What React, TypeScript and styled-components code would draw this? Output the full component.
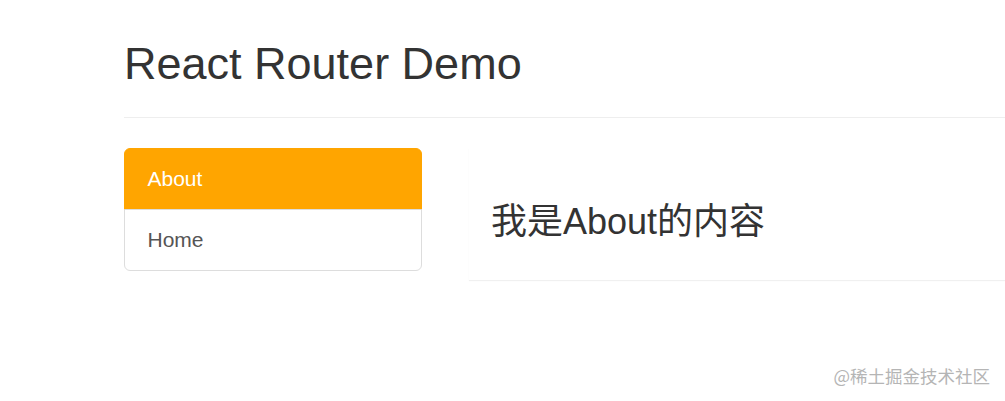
import React from 'react';
import styled, { createGlobalStyle } from 'styled-components';

const GlobalStyle = createGlobalStyle`
	html, body {
		margin: 0;
		padding: 0;
		background: #fff;
	}
	body {
		font-family: "Liberation Sans", Arial, "Noto Sans CJK SC", sans-serif;
		color: #333;
		overflow: hidden;
	}
`;

const Page = styled.div`
	position: relative;
	width: 1005px;
	height: 401px;
	overflow: hidden;
`;

const Container = styled.div`
	padding-left: 124px;
`;

const PageHeader = styled.header`
	padding: 39px 0 13.5px;
	border-bottom: 1px solid #eee;
`;

const Title = styled.h1`
	margin: 0 0 15px;
	font-size: 45px;
	line-height: 49.5px;
	font-weight: 500;
	color: #333;
`;

const Row = styled.div`
	display: flex;
	align-items: flex-start;
	gap: 47px;
	margin-top: 30px;
`;

const ListGroup = styled.nav`
	width: 298px;
	flex-shrink: 0;
	display: flex;
	flex-direction: column;
`;

const ListItem = styled.a<{ $active?: boolean }>`
	display: block;
	padding: 15px 22.5px;
	font-size: 21px;
	line-height: 30px;
	text-decoration: none;
	border: 1px solid ${p => (p.$active ? '#ffa500' : '#ddd')};
	background: ${p => (p.$active ? '#ffa500' : '#fff')};
	color: ${p => (p.$active ? '#fff' : '#555')};
	& + & {
		margin-top: -1px;
	}
	&:first-child {
		border-radius: 6px 6px 0 0;
	}
	&:last-child {
		border-radius: 0 0 6px 6px;
	}
`;

const Panel = styled.section`
	flex: 1;
	padding: 54px 22px 38px;
	background: #fff;
	box-shadow: 0 1px 1px rgba(0, 0, 0, 0.06);
`;

const Content = styled.h3`
	margin: 0;
	font-family: "Liberation Sans", Arial, "Noto Sans CJK SC", sans-serif;
	font-size: 36px;
	line-height: 40px;
	font-weight: 400;
	color: #333;
`;

const Watermark = styled.div`
	position: absolute;
	right: 15px;
	top: 365px;
	font-family: "Noto Sans CJK SC", sans-serif;
	font-size: 17.5px;
	line-height: 22px;
	color: #b5b5b5;
`;

export default function App() {
	return (
		<Page>
			<GlobalStyle />
			<Container>
				<PageHeader>
					<Title>React Router Demo</Title>
				</PageHeader>
				<Row>
					<ListGroup>
						<ListItem $active href="#/about">About</ListItem>
						<ListItem href="#/home">Home</ListItem>
					</ListGroup>
					<Panel>
						<Content>我是About的内容</Content>
					</Panel>
				</Row>
			</Container>
			<Watermark>@稀土掘金技术社区</Watermark>
		</Page>
	);
}
